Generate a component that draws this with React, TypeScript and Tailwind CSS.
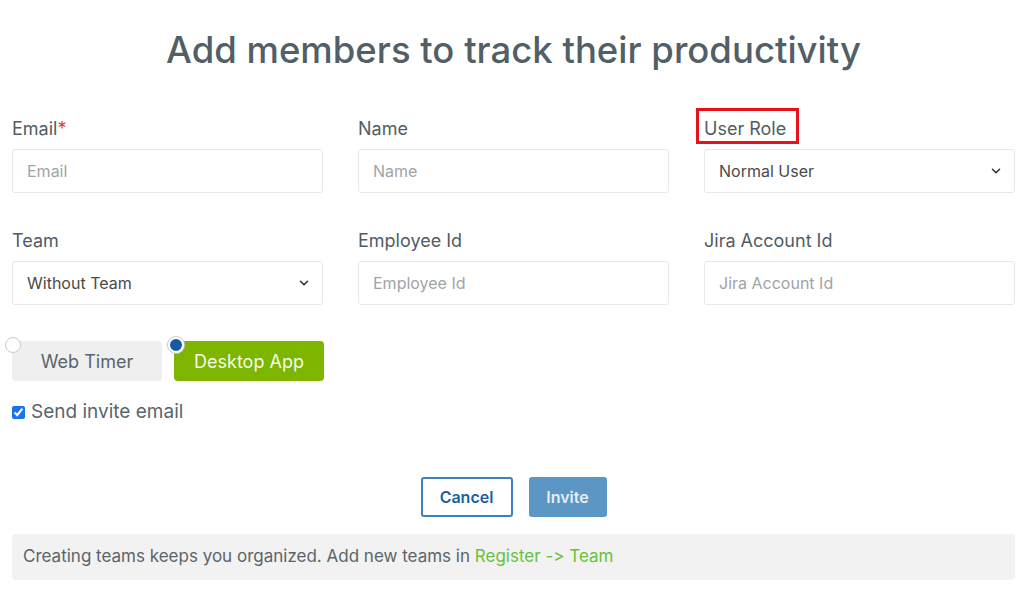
import { ChevronDown } from "lucide-react";

const font = { fontFamily: '"Inter", "Liberation Sans", sans-serif' };

function Label({ children, required }: { children: React.ReactNode; required?: boolean }) {
  return (
    <label className="block text-[18px] leading-[24px] text-[#4f5d64]">
      {children}
      {required && <span className="text-[#e53e3e]">*</span>}
    </label>
  );
}

function TextField({ label, placeholder, required }: { label: string; placeholder: string; required?: boolean }) {
  return (
    <div>
      <Label required={required}>{label}</Label>
      <input
        placeholder={placeholder}
        className="mt-[8px] block h-[44px] w-full rounded-[3px] border border-[#e6e8ea] bg-white px-[14px] text-[16px] text-[#4a4a4a] outline-none placeholder:text-[#9fa4a7]"
      />
    </div>
  );
}

function SelectField({ label, value, boxed }: { label: string; value: string; boxed?: boolean }) {
  return (
    <div>
      {boxed ? (
        <div className="relative inline-block">
          <Label>{label}</Label>
          {/* highlight annotation */}
          <span className="pointer-events-none absolute -bottom-[3px] -left-[8px] -right-[13px] -top-[9px] border-[3px] border-[#e8101a]" />
        </div>
      ) : (
        <Label>{label}</Label>
      )}
      <div className="relative mt-[8px]">
        <select className="block h-[44px] w-full appearance-none rounded-[3px] border border-[#e6e8ea] bg-white px-[14px] text-[16px] text-[#4a4a4a] outline-none">
          <option>{value}</option>
        </select>
        <ChevronDown className="pointer-events-none absolute right-[12px] top-[15px] h-[14px] w-[14px] text-[#333]" strokeWidth={2.75} />
      </div>
    </div>
  );
}

export default function App() {
  return (
    <div className="min-h-screen bg-white pl-[12px] pr-[9px]" style={font}>
      <h1 className="pt-[28px] text-center text-[36.5px] font-medium leading-[44px] text-[#525f66]">
        Add members to track their productivity
      </h1>

      <div className="mt-[45px] grid grid-cols-3 gap-x-[35px] gap-y-[36px]">
        <TextField label="Email" placeholder="Email" required />
        <TextField label="Name" placeholder="Name" />
        <SelectField label="User Role" value="Normal User" boxed />
        <SelectField label="Team" value="Without Team" />
        <TextField label="Employee Id" placeholder="Employee Id" />
        <TextField label="Jira Account Id" placeholder="Jira Account Id" />
      </div>

      <div className="mt-[36px] flex gap-[12px]">
        <button className="relative h-[40px] w-[150px] rounded-[4px] bg-[#efefef] text-[18px] text-[#5a656b]">
          <span className="absolute -left-[7px] -top-[4px] h-[16px] w-[16px] rounded-full border border-[#c9c9c9] bg-white" />
          Web Timer
        </button>
        <button className="relative h-[40px] w-[150px] rounded-[4px] bg-[#7db500] text-[18px] text-[#f4fbe6]">
          <span className="absolute -left-[6px] -top-[4px] h-[16px] w-[16px] rounded-full border-2 border-white bg-[#1859a3] shadow-[0_0_0_1px_#c9c9c9]" />
          Desktop App
        </button>
      </div>

      <label className="mt-[19px] flex items-center gap-[6px] text-[19px] leading-[24px] text-[#5a656b]">
        <input type="checkbox" defaultChecked className="h-[13px] w-[13px] accent-[#1a73e8]" />
        Send invite email
      </label>

      <div className="mt-[53px] flex justify-center gap-[16px]">
        <button className="h-[40px] w-[92px] rounded-[3px] border-2 border-[#3d80bf] bg-white text-[16px] font-semibold text-[#1e5f9e]">
          Cancel
        </button>
        <button className="h-[40px] w-[78px] rounded-[3px] bg-[#5b96c4] text-[16px] font-semibold text-[#e3eef7]">
          Invite
        </button>
      </div>

      <div className="mt-[17px] flex h-[46px] items-center rounded-[4px] bg-[#f2f2f2] px-[11px] text-[17px] text-[#5b6469] [font-variant-ligatures:none] [font-feature-settings:'calt'_0]">
        Creating teams keeps you organized. Add new teams in&nbsp;
        <span className="text-[#66c23a]">Register -&gt; Team</span>
      </div>
    </div>
  );
}
